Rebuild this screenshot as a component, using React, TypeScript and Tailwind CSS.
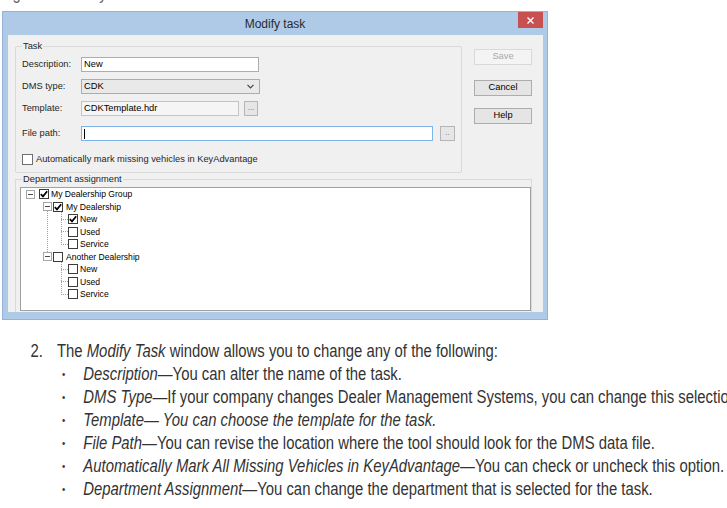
import React from "react";

type Node = { lvl: 0 | 1 | 2; text: string; checked?: boolean; exp?: boolean };

const tree: Node[] = [
  { lvl: 0, text: "My Dealership Group", checked: true, exp: true },
  { lvl: 1, text: "My Dealership", checked: true, exp: true },
  { lvl: 2, text: "New", checked: true },
  { lvl: 2, text: "Used" },
  { lvl: 2, text: "Service" },
  { lvl: 1, text: "Another Dealership", exp: true },
  { lvl: 2, text: "New" },
  { lvl: 2, text: "Used" },
  { lvl: 2, text: "Service" },
];

const padByLvl: Record<number, string> = {
  0: "pl-[5px]",
  1: "pl-[22px]",
  2: "pl-[47px]",
};

function Tick() {
  return (
    <svg width="8" height="8" viewBox="0 0 8 8">
      <path d="M0.8 4.2 L3 6.4 L7.2 1.2" fill="none" stroke="#000" strokeWidth="1.7" />
    </svg>
  );
}

function TreeCheck({ checked }: { checked?: boolean }) {
  return (
    <span className="flex h-[10px] w-[10px] shrink-0 items-center justify-center border border-[#3c3c3c] bg-white">
      {checked && <Tick />}
    </span>
  );
}

function Expander() {
  return (
    <span className="flex h-[9px] w-[9px] shrink-0 items-center justify-center border border-[#a6a6a6] bg-white">
      <span className="h-px w-[5px] bg-[#4a4a4a]" />
    </span>
  );
}

function TreeLines() {
  const v = (x: number, y1: number, y2: number) => (
    <line x1={x + 0.5} y1={y1} x2={x + 0.5} y2={y2} stroke="#a0a0a0" strokeDasharray="1 1" />
  );
  const h = (y: number, x1: number, x2: number) => (
    <line x1={x1} y1={y + 0.5} x2={x2} y2={y + 0.5} stroke="#a0a0a0" strokeDasharray="1 1" />
  );
  return (
    <svg className="pointer-events-none absolute left-0 top-0" width="120" height="120" shapeRendering="crispEdges">
      {v(26, 23, 65)}
      {v(40, 24, 56)}
      {h(31, 40, 47)}
      {h(43, 40, 47)}
      {h(56, 40, 47)}
      {v(40, 74, 106)}
      {h(81, 40, 47)}
      {h(93, 40, 47)}
      {h(106, 40, 47)}
    </svg>
  );
}

function Tree() {
  return (
    <div className="relative ml-[4px] mt-[2px] h-[124px] w-[511px] border border-[#a0a0a0] bg-white">
      <TreeLines />
      <div className="relative flex flex-col">
        {tree.map((n, i) => (
          <div key={i} className={"flex h-[12.5px] items-center " + padByLvl[n.lvl]}>
            {n.exp && <Expander />}
            <span className={n.lvl === 0 ? "ml-[4px] flex" : n.lvl === 1 ? "ml-[1px] flex" : "flex"}>
              <TreeCheck checked={n.checked} />
            </span>
            <span className={(n.lvl === 1 ? "ml-[3px] " : "ml-[2px] ") + "whitespace-nowrap text-[8.6px] leading-[10px] text-black"}>
              {n.text}
            </span>
          </div>
        ))}
      </div>
    </div>
  );
}

function Label({ children }: { children: React.ReactNode }) {
  return <span className="w-[59px] shrink-0 text-[9.3px] leading-[11px] text-[#262626]">{children}</span>;
}

function SmallBtn({ text, w }: { text: string; w: string }) {
  return (
    <span
      className={
        "flex h-[15px] shrink-0 items-end justify-center border border-[#b5b5b5] bg-[#e6e6e6] pb-[3px] text-[8px] leading-[8px] text-[#666] " +
        w
      }
    >
      {text}
    </span>
  );
}

function TaskGroup() {
  return (
    <div className="ml-[7px] h-[127px] w-[447px] rounded-[2px] border border-[#d9d9d9]">
      <span className="-mt-[6px] ml-[6px] block w-fit bg-[#f0f0f0] px-px text-[9.3px] leading-[11px] text-[#262626]">Task</span>
      <div className="mt-[5px] flex items-center pl-[6px]">
        <Label>Description:</Label>
        <span className="flex h-[15px] w-[178px] items-center border border-[#abadb3] bg-white pl-[2px] text-[9.3px] text-black">New</span>
      </div>
      <div className="mt-[7px] flex items-center pl-[6px]">
        <Label>DMS type:</Label>
        <span className="flex h-[15px] w-[179px] items-center justify-between border border-[#acacac] bg-[#e9e9e9] pl-[2px] pr-[5px] text-[9.3px] text-black">
          CDK
          <svg width="7" height="5" viewBox="0 0 7 5">
            <path d="M0.5 0.8 L3.5 3.8 L6.5 0.8" fill="none" stroke="#444" strokeWidth="1.2" />
          </svg>
        </span>
      </div>
      <div className="mt-[7px] flex items-center pl-[6px]">
        <Label>Template:</Label>
        <span className="flex h-[15px] w-[158px] items-center border border-[#c4c4c4] bg-[#f5f5f5] pl-[2px] text-[9.3px] text-black">
          CDKTemplate.hdr
        </span>
        <span className="ml-[5px] flex">
          <SmallBtn text="..." w="w-[14px]" />
        </span>
      </div>
      <div className="mt-[10px] flex items-center pl-[6px]">
        <Label>File path:</Label>
        <span className="flex h-[15px] w-[352px] items-center border border-[#7eb4ea] bg-white pl-[2px]">
          <span className="h-[10px] w-px bg-black" />
        </span>
        <span className="ml-[7px] flex">
          <SmallBtn text=".." w="w-[15px]" />
        </span>
      </div>
      <div className="mt-[13px] flex items-center pl-[6px]">
        <span className="h-[11px] w-[11px] shrink-0 border border-[#707070] bg-white" />
        <span className="ml-[3px] whitespace-nowrap text-[9.3px] leading-[11px] text-[#262626]">
          Automatically mark missing vehicles in KeyAdvantage
        </span>
      </div>
    </div>
  );
}

function Buttons() {
  return (
    <div className="ml-[12px] mt-[3px] flex w-[58px] flex-col">
      <span className="flex h-[16px] items-center justify-center border border-[#d9d9d9] bg-[#f4f4f4] text-[9.3px] text-[#a8a8a8]">
        Save
      </span>
      <span className="mt-[15px] flex h-[16px] items-center justify-center border border-[#adadad] bg-[#e5e5e5] text-[9.3px] text-black">
        Cancel
      </span>
      <span className="mt-[12px] flex h-[16px] items-center justify-center border border-[#adadad] bg-[#e5e5e5] text-[9.3px] text-black">
        Help
      </span>
    </div>
  );
}

function Dialog() {
  return (
    <div className="ml-[2px] flex h-[309px] w-[546px] flex-col border border-[#95b3d6] bg-[#afcae6] font-['Liberation_Sans',Arial,sans-serif]">
      <div className="grid h-[23px] shrink-0 grid-cols-[1fr_auto_1fr]">
        <span />
        <span className="self-center text-[12px] leading-[14px] text-[#2a2a2a]">Modify task</span>
        <span className="mr-[4px] flex h-[16px] w-[25px] items-center justify-center justify-self-end bg-[#c75050]">
          <svg width="7" height="7" viewBox="0 0 7 7">
            <path d="M0.5 0.5 L6.5 6.5 M6.5 0.5 L0.5 6.5" stroke="#fff" strokeWidth="1.4" />
          </svg>
        </span>
      </div>
      <div className="ml-[5px] flex h-[277px] w-[535px] flex-col bg-[#f0f0f0]">
        <div className="mt-[11px] flex">
          <TaskGroup />
          <Buttons />
        </div>
        <div className="ml-[7px] mt-[6px] w-[517px] flex-1 border-x border-t border-[#d9d9d9]">
          <span className="-mt-[6px] ml-[6px] block w-fit bg-[#f0f0f0] px-px text-[9.3px] leading-[11px] text-[#262626]">
            Department assignment
          </span>
          <Tree />
        </div>
      </div>
    </div>
  );
}

function Bullet({ children }: { children: React.ReactNode }) {
  return (
    <div className="flex h-[23px] items-center whitespace-nowrap pl-[73px]">
      <span className="w-[25px] shrink-0 text-[11px]">•</span>
      <span>{children}</span>
    </div>
  );
}

export default function App() {
  return (
    <div className="relative h-[508px] w-[727px] overflow-hidden bg-white">
      <div className="h-[11px] overflow-hidden">
        <div className="-mt-[16px] w-[900px] origin-left scale-x-[0.85] whitespace-nowrap font-['Liberation_Sans',sans-serif] text-[17.5px] leading-[18px] text-[#666]">
          Figure 2: Modify task window
        </div>
      </div>
      <Dialog />
      <div className="mt-[20px] w-[1000px] origin-left scale-x-[0.85] font-['Liberation_Sans',sans-serif] text-[17.5px] leading-[23px] text-[#333]">
        <div className="flex h-[23px] items-center whitespace-nowrap pl-[36px]">
          <span className="w-[31px] shrink-0">2.</span>
          <span>
            The <i>Modify Task</i> window allows you to change any of the following:
          </span>
        </div>
        <Bullet>
          <i>Description</i>—You can alter the name of the task.
        </Bullet>
        <Bullet>
          <i>DMS Type</i>—If your company changes Dealer Management Systems, you can change this selection.
        </Bullet>
        <Bullet>
          <i>Template— You can choose the template for the task.</i>
        </Bullet>
        <Bullet>
          <i>File Path</i>—You can revise the location where the tool should look for the DMS data file.
        </Bullet>
        <Bullet>
          <i>Automatically Mark All Missing Vehicles in KeyAdvantage</i>—You can check or uncheck this option.
        </Bullet>
        <Bullet>
          <i>Department Assignment</i>—You can change the department that is selected for the task.
        </Bullet>
      </div>
    </div>
  );
}
